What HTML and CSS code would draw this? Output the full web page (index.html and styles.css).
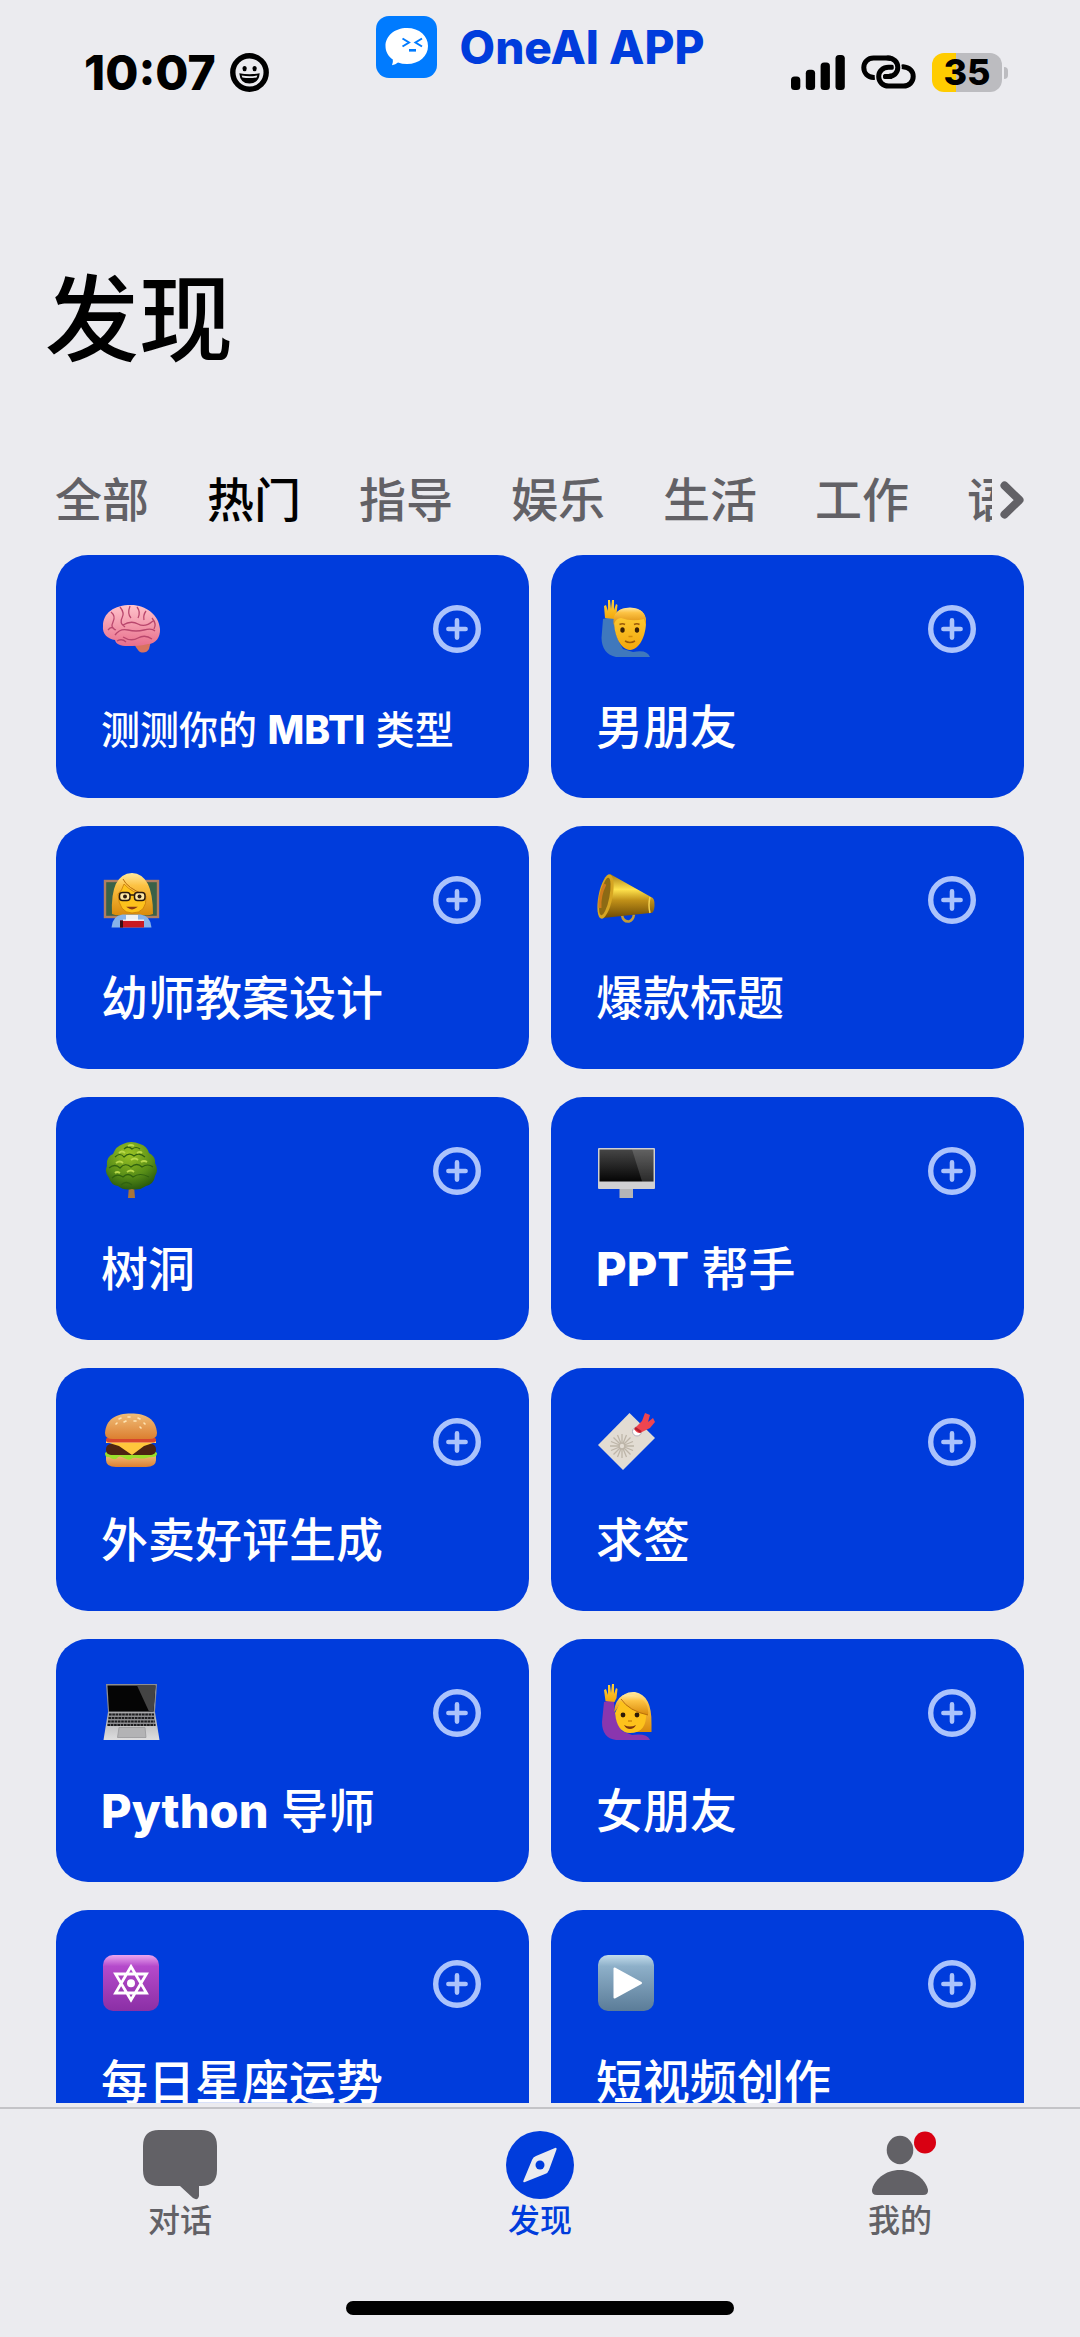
FILE: index.html
```
<!doctype html>
<html lang="zh-CN">
<head>
	<meta charset="UTF-8">
	<meta name="viewport" content="width=device-width, initial-scale=1">
	<title>发现</title>

	<link rel="stylesheet" href="styles.css">
</head>
<body>
	<!-- shared icons -->
	<svg class="defs" aria-hidden="true">
		<defs>
			<symbol id="plus" viewBox="0 0 48 48">
				<circle cx="24" cy="24" r="21.3" fill="none" stroke="currentColor" stroke-width="5.4"/>
				<path d="M24 15.4v17.2M15.4 24h17.2" stroke="currentColor" stroke-width="4.6" stroke-linecap="round"/>
			</symbol>
			<linearGradient id="gold" x1="0" y1="0" x2="0" y2="1">
				<stop offset="0" stop-color="#a87a12"/><stop offset=".35" stop-color="#ffe34d"/><stop offset=".6" stop-color="#c09018"/><stop offset="1" stop-color="#6d4a05"/>
			</linearGradient>
			<linearGradient id="pink" x1="0" y1="0" x2="0" y2="1">
				<stop offset="0" stop-color="#ffc3cb"/><stop offset="1" stop-color="#e86f8c"/>
			</linearGradient>
			<linearGradient id="skin" x1="0" y1="0" x2="0" y2="1">
				<stop offset="0" stop-color="#ffd23a"/><stop offset="1" stop-color="#f3a70c"/>
			</linearGradient>
			<linearGradient id="hair" x1="0" y1="0" x2="0" y2="1">
				<stop offset="0" stop-color="#ffe9a0"/><stop offset=".3" stop-color="#fcc243"/><stop offset="1" stop-color="#d98a0b"/>
			</linearGradient>
			<linearGradient id="screen" x1="0" y1="0" x2="0" y2="1">
				<stop offset="0" stop-color="#464646"/><stop offset="1" stop-color="#050505"/>
			</linearGradient>
			<linearGradient id="metal" x1="0" y1="0" x2="0" y2="1">
				<stop offset="0" stop-color="#a9a9ab"/><stop offset="1" stop-color="#dededf"/>
			</linearGradient>
			<linearGradient id="bun" x1="0" y1="0" x2="0" y2="1">
				<stop offset="0" stop-color="#f0bd78"/><stop offset="1" stop-color="#dc7f30"/>
			</linearGradient>
			<radialGradient id="leaf" cx=".45" cy=".25" r=".8">
				<stop offset="0" stop-color="#9cc425"/><stop offset=".6" stop-color="#578d17"/><stop offset="1" stop-color="#22520d"/>
			</radialGradient>
			<linearGradient id="violet" x1="0" y1="0" x2="0" y2="1">
				<stop offset="0" stop-color="#eba6ee"/><stop offset=".2" stop-color="#b54acb"/><stop offset="1" stop-color="#8b2fa5"/>
			</linearGradient>
			<linearGradient id="steel" x1="0" y1="0" x2="0" y2="1">
				<stop offset="0" stop-color="#c2dceb"/><stop offset=".2" stop-color="#8eb0c9"/><stop offset="1" stop-color="#5b7c98"/>
			</linearGradient>
		</defs>
	</svg>

	<div class="app">
		<header class="status">
			<div class="status-left">
				<span class="time">10:07</span>
				<svg width="39" height="39" viewBox="0 0 39 39" aria-hidden="true">
					<circle cx="19.5" cy="19.5" r="16.7" fill="none" stroke="#000" stroke-width="5.4"/>
					<ellipse cx="14.6" cy="15.6" rx="2.1" ry="2.7"/>
					<ellipse cx="24.6" cy="15.6" rx="2.1" ry="2.7"/>
					<path d="M9.3 20.2q10.200 2 20.400 0q-.8 10.300-10.200 10.300t-10.200-10.300z"/>
					<path d="M11.600 22.400q7.900 1.500 15.800 0l-.8 2q-7.100 1.400-14.200 0z" fill="#ebebef"/>
				</svg>
			</div>
			<a class="brand" href="#">
				<svg width="61" height="62" viewBox="0 0 61 62" aria-hidden="true">
					<rect width="61" height="62" rx="13" fill="#007bff"/>
					<path d="M31 12c12.500 0 21 8 21 18s-8.500 18-21 18q-5 0-9-1.500-2.500 2-6 2.700 1.300-2.600.8-5.600C12 40 9.500 35.500 9.500 30c0-10 9-18 21.500-18z" fill="#fff"/>
					<path d="M26.500 22.500l6.500 4-6.500 4M46 22.500l-6.500 4 6.500 4" fill="none" stroke="#007bff" stroke-width="2"/>
					<rect x="33" y="33" width="7" height="2.600" fill="#007bff"/>
				</svg>
				<span>OneAI APP</span>
			</a>
			<div class="status-right">
				<svg width="54" height="35" viewBox="0 0 54 35" aria-hidden="true">
					<rect x="0" y="21.500" width="9.300" height="13.500" rx="3.500"/>
					<rect x="14.800" y="14.800" width="9.300" height="20.200" rx="3.500"/>
					<rect x="29.600" y="7.500" width="9.300" height="27.500" rx="3.500"/>
					<rect x="44.500" y="0" width="9.300" height="35" rx="3.500"/>
				</svg>
				<svg width="55" height="34" viewBox="0 0 55 34" fill="none" stroke="#000" stroke-width="5" stroke-linecap="butt" aria-hidden="true">
					<path d="M12.800 22.500C6.500 22 2.800 18 2.800 12.600C2.800 7 7 2.900 12.500 2.900H27C32.500 2.900 36.800 7 36.800 12.600C36.800 18 32.500 21.600 27.500 21.600H24.500" stroke-linecap="round"/>
					<path d="M31 12.300H27.500C22 12.300 17.700 16 17.700 21.500C17.700 27 22 31.100 27.500 31.100H42.500C48 31.100 52.200 27 52.200 21.500C52.200 16 48.500 12.300 42 11.700" stroke="#ebebef" stroke-width="8"/>
					<path d="M31 12.300H27.500C22 12.300 17.700 16 17.700 21.500C17.700 27 22 31.100 27.500 31.100H42.500C48 31.100 52.200 27 52.200 21.500C52.200 16 48.500 12.300 42 11.700" stroke-linecap="round"/>
					<path d="M30 2.900C34.500 3.800 36.800 8 36.800 12.600C36.800 17 34 20.400 30.500 21.300" stroke="#ebebef" stroke-width="8"/>
					<path d="M27 2.900C32.500 2.900 36.800 7 36.800 12.600C36.800 18 32.500 21.600 27.500 21.600H24.500" stroke-linecap="round"/>
				</svg>
				<div class="battery"><span>35</span></div>
			</div>
		</header>

		<h1 class="title">发现</h1>

		<nav class="filter">
			<div class="filter-list">
				<button>全部</button>
				<button class="active">热门</button>
				<button>指导</button>
				<button>娱乐</button>
				<button>生活</button>
				<button>工作</button>
				<button>语言</button>
			</div>
			<button class="filter-next" aria-label="更多分类">
				<svg width="24" height="40" viewBox="0 0 24 40" aria-hidden="true"><path d="M4.500 5.500L19.500 20 4.500 34.500" fill="none" stroke="currentColor" stroke-width="8" stroke-linecap="round" stroke-linejoin="round"/></svg>
			</button>
		</nav>

		<main class="cards">
			<article class="card">
				<div class="card-top">
					<svg class="emoji" viewBox="0 0 60 60" aria-hidden="true">
						<path d="M31 41q5 10 8 12 6 2 9-3l2-8z" fill="#d8735f"/>
						<path d="M2 27C2 14 13 6 30 6c15 0 28 10 29 24 .4 8-4 15-12 15-8 2-14 2-20 2-8 0-12-2-13-6C7 40 1 35 2 27z" fill="url(#pink)"/>
						<path d="M7 31q4-5 7 0M10 13q5 4 2 10t3 8M19 8q5 6 2 11t3 9M29 7q-3 8 1 12M36 8q4 5 1 11M45 12q-3 4-2 9M22 26q8-5 15-1t15-3M14 36q5-7 13-5t16 0 11 1M22 38q8 5 15 1t14 1M51 19q5 6 2 11M16 42q5-3 9 1" fill="none" stroke="#b9476d" stroke-width="1.300"/>
					</svg>
					<button class="add" aria-label="添加"><svg><use href="#plus"/></svg></button>
				</div>
				<h2><span class="small">测测你的 <b>MBTI</b> 类型</span></h2>
			</article>

			<article class="card">
				<div class="card-top">
					<svg class="emoji" viewBox="0 0 60 60" aria-hidden="true">
						<path d="M7 20q6-2 11-1 0 18 9 31l10 3q14-3 17 5H20Q6 55 5.500 39z" fill="#3f78bd"/>
						<path d="M9 19L8 7l2-1 2 6 0-11h2l1 9 1-9 2 0 0 10 2-6 1.500 1-1 9-2 5z" fill="url(#skin)"/>
						<path d="M18 22q0-13 16-13t16 14c0 14-7 28-16 28S18 37 18 22z" fill="url(#skin)"/>
						<path d="M17.500 26Q16 9 34 8.500q17 .5 16 17.500l-2-6q-12 3-23-1-5 0-7.500 7z" fill="url(#hair)"/>
						<ellipse cx="26.500" cy="31" rx="2.200" ry="2.800" fill="#3a2106"/><ellipse cx="41" cy="31" rx="2.200" ry="2.800" fill="#3a2106"/>
						<path d="M23.500 25.500q3-1.500 5.500 0M38 25.500q3-1.500 5.500 0M29 42q5 3 10 0" fill="none" stroke="#9a5a08" stroke-width="1.500"/>
						<path d="M32.500 37.500h4" stroke="#d18a0a" stroke-width="1.500"/>
					</svg>
					<button class="add" aria-label="添加"><svg><use href="#plus"/></svg></button>
				</div>
				<h2>男朋友</h2>
			</article>

			<article class="card">
				<div class="card-top">
					<svg class="emoji" viewBox="0 0 60 60" aria-hidden="true">
						<rect x="4" y="11" width="53" height="36" fill="#3a6148" stroke="#b07e62" stroke-width="2.400"/>
						<path d="M11 44Q9 4 31 3q21 1 21 41-5 2-9 1H20q-4 1-9-1z" fill="url(#hair)"/>
						<path d="M17 24q4-3 6-10 8 9 22 12 1 17-14 17-13 0-14-19z" fill="#fdc21c" stroke="#c97c08" stroke-width=".8"/>
						<path d="M10.500 57.600q1-12 11-13h18q10 1 11 13z" fill="#86b3ea"/>
						<path d="M25 45h12v6H25z" fill="#eef1f4"/>
						<rect x="19" y="50.500" width="24" height="7" fill="#c91a22"/><path d="M19 50.500h3v7h-3z" fill="#3b0f13"/><path d="M22 50.200h21" stroke="#fff" stroke-width="1.200"/>
						<path d="M22 9q4 9 22 16" fill="none" stroke="#b96f0a" stroke-width="1"/>
						<g fill="#ffe9a8" stroke="#2a1a10" stroke-width="1.500"><rect x="18.500" y="22.500" width="10.500" height="8" rx="3"/><rect x="33.500" y="22.500" width="10.500" height="8" rx="3"/><path d="M29 25h4.500"/></g>
						<circle cx="24" cy="26.500" r="2" fill="#2a1a10"/><circle cx="38.500" cy="26.500" r="2" fill="#2a1a10"/>
						<path d="M27.500 37.500q3.500 2.500 7 0z" stroke="#8a3a14" stroke-width="1.500" fill="#8a3a14"/>
					</svg>
					<button class="add" aria-label="添加"><svg><use href="#plus"/></svg></button>
				</div>
				<h2>幼师教案设计</h2>
			</article>

			<article class="card">
				<div class="card-top">
					<svg class="emoji" viewBox="0 0 60 60" aria-hidden="true">
						<path d="M26 45q1 7 7 6.500 4-1 5-7" fill="none" stroke="#c09c3c" stroke-width="2.500"/>
						<path d="M14 4l41 23q4 1 3.500 9-.5 8-4.500 7L7 48z" fill="url(#gold)"/>
						<ellipse cx="9.500" cy="26.500" rx="7" ry="22.500" transform="rotate(11 9.500 26.500)" fill="#d6a522"/>
						<ellipse cx="8.800" cy="26.500" rx="4.600" ry="19" transform="rotate(11 8.800 26.500)" fill="#8d6a14"/>
						<path d="M4 38q-1-12 5-24" fill="none" stroke="#cf7a1c" stroke-width="3"/>
						<path d="M54 27q-2 8 0 16" fill="none" stroke="#f0cf51" stroke-width="1.500"/>
					</svg>
					<button class="add" aria-label="添加"><svg><use href="#plus"/></svg></button>
				</div>
				<h2>爆款标题</h2>
			</article>

			<article class="card">
				<div class="card-top">
					<svg class="emoji" viewBox="0 0 60 60" aria-hidden="true">
						<path d="M28 45h5l1 12h-7z" fill="#a9743a"/>
						<path d="M22 3q8-4 17 0 7 2 9 9 7 4 6 10 4 7 0 13-1 8-9 10-7 5-14 3-8 2-14-3-7-1-9-8-5-6-2-12-1-9 6-12 3-8 10-10z" fill="url(#leaf)"/>
						<path d="M14 16q5-5 9 0 5-5 10-1 5-4 11 1M8 27q6-5 11 0 5-6 11-1 6-5 11 0 6-4 11 0M11 37q5-5 11-1 5-5 10 0 7-5 16 0M23 8q4-4 8 0 4-3 8 0M20 44q5-5 11 0" fill="none" stroke="#2f6210" stroke-width="1.200"/>
						<path d="M15 22q4-3 7 0M30 19q4-3 7 0M26 31q4-3 7 0M14 32q2-2 5 0M27 5q3-2 6 0M40 21q3-2 6 0M18 12q3-3 6 0M36 12q3-2 5 0" fill="none" stroke="#b9d94a" stroke-width="1.800"/>
					</svg>
					<button class="add" aria-label="添加"><svg><use href="#plus"/></svg></button>
				</div>
				<h2>树洞</h2>
			</article>

			<article class="card">
				<div class="card-top">
					<svg class="emoji" viewBox="0 0 60 60" aria-hidden="true">
						<rect x="23.500" y="47" width="13.500" height="10" fill="#b5b5b7"/>
						<rect x="2" y="7" width="57" height="41" rx="1" fill="#d0d0d2"/>
						<rect x="3.500" y="8.500" width="54" height="32" fill="url(#screen)"/>
						<path d="M36 8.500h21.500v32H46z" fill="#fff" opacity=".15"/>
					</svg>
					<button class="add" aria-label="添加"><svg><use href="#plus"/></svg></button>
				</div>
				<h2><b>PPT</b> 帮手</h2>
			</article>

			<article class="card">
				<div class="card-top">
					<svg class="emoji" viewBox="0 0 60 60" aria-hidden="true">
						<path d="M5 43h50v5q0 7-10 7H15q-10 0-10-7z" fill="url(#bun)"/>
						<path d="M4 41q4-4 8-2h36q4-2 8 2 0 4-4 4t-7 1-8 0-7 1-7-1-7 0-8-1q-4 1-4-4z" fill="#9be02b"/>
						<rect x="5" y="32" width="50" height="11" rx="5" fill="#4c2412"/>
						<path d="M5 30h50l-12 4-12 9-13-9z" fill="#ffc63c"/>
						<path d="M5 29q25-4 50 0v2H5z" fill="#ffe07a"/>
						<rect x="5" y="25.500" width="50" height="5" rx="2.500" fill="#d8452c"/>
						<path d="M4 21C5 7 15 1.500 30 1.500S55 7 56 21q0 6-8 6H12q-8 0-8-6z" fill="url(#bun)"/>
						<path d="M18 7l2-1M27 5h2M37 6l2 1M23 10l2-1M33 9h2M43 11l1 1M15 12l1-1M39 15l1 1" stroke="#ffe5b5" stroke-width="1.600" stroke-linecap="round"/>
					</svg>
					<button class="add" aria-label="添加"><svg><use href="#plus"/></svg></button>
				</div>
				<h2>外卖好评生成</h2>
			</article>

			<article class="card">
				<div class="card-top">
					<svg class="emoji" viewBox="0 0 60 60" aria-hidden="true">
						<path d="M33.500 1L59 26 27 58 2 33z" fill="#e2dcd3"/>
						<circle cx="41" cy="19.500" r="4.500" fill="#fff" stroke="#b0aeb9" stroke-width="1"/>
						<g stroke="#bdb5a8" stroke-width="1.300"><path d="M26 22v24M14 34h24M17.500 25.500l17 17M34.500 25.500l-17 17M21.500 23l9 22M30.500 23l-9 22M15 29.500l22 9M37 29.500l-22 9"/></g>
						<circle cx="26" cy="34" r="2.200" fill="#e2dcd3"/>
						<path d="M38 17l8-8 3-8 5 2-2 7 5-4 2 4-5 6-8 4q-4 3-8-3z" fill="#ef4550"/>
						<path d="M39 16l6 4" stroke="#b6202e" stroke-width="2.500"/>
					</svg>
					<button class="add" aria-label="添加"><svg><use href="#plus"/></svg></button>
				</div>
				<h2>求签</h2>
			</article>

			<article class="card">
				<div class="card-top">
					<svg class="emoji" viewBox="0 0 60 60" aria-hidden="true">
						<path d="M5 1h51l-2 28H7z" fill="#8d8d90"/>
						<path d="M6.500 2.500h48l-2 26H8z" fill="#050505"/>
						<path d="M36 2.500h18.500l-2 26H48z" fill="#444"/>
						<path d="M7 29h47l4.500 28H2.500z" fill="url(#metal)"/>
						<path d="M8 30h45l1.800 13H6z" fill="#8e8e91"/>
						<path d="M8 31.500h45M7.500 35h46M7 38.500h47M6.500 42h48" stroke="#1c1c1e" stroke-width="2.200" stroke-dasharray="2.600 .7"/>
						<path d="M18 44.500h26l1 10H16.500z" fill="#b3b3b5" stroke="#98989b" stroke-width=".8"/>
					</svg>
					<button class="add" aria-label="添加"><svg><use href="#plus"/></svg></button>
				</div>
				<h2><b>Python</b> 导师</h2>
			</article>

			<article class="card">
				<div class="card-top">
					<svg class="emoji" viewBox="0 0 60 60" aria-hidden="true">
						<path d="M22 18q6-10 17-9 17 3 16.500 32v8H35z" fill="url(#hair)"/>
						<path d="M8 19q5-2 10 0 0 18 8 29l10 4q15-2 18 5H20Q6 55 6 39z" fill="#8a36ae"/>
						<path d="M9.500 18L8 7l2-1 2 6 0-10h2l1 8 1-9 2 0 0 10 2-6 1.500 1-1 9-2 4z" fill="url(#skin)"/>
						<path d="M19 30q3-5 5-13 11 10 26 13 1 20-16 20-13 0-15-20z" fill="#fdc21c"/>
						<path d="M18 29q1-12 9-17 15-2 22 7 4 6 3 13-19-4-27-16-2 9-7 13z" fill="url(#hair)"/>
						<path d="M25 16q8 12 27 16" fill="none" stroke="#b96f0a" stroke-width="1"/>
						<circle cx="27" cy="32" r="2.400" fill="#2c1b08"/><circle cx="41" cy="32" r="2.400" fill="#2c1b08"/>
						<path d="M28 42q6 3 12 0-2 4-6 4t-6-4z" fill="#7b3610"/>
						<path d="M32 38h4" stroke="#d18a0a" stroke-width="1.500"/>
					</svg>
					<button class="add" aria-label="添加"><svg><use href="#plus"/></svg></button>
				</div>
				<h2>女朋友</h2>
			</article>

			<article class="card">
				<div class="card-top">
					<svg class="emoji" viewBox="0 0 60 60" aria-hidden="true">
						<rect x="2" y="1" width="56" height="56" rx="10" fill="url(#violet)"/>
						<path d="M30 12.500L45.500 39h-31zM30 46L14.500 20h31z" fill="none" stroke="#fff" stroke-width="2.800"/>
						<circle cx="30" cy="29.300" r="4" fill="#fff"/>
					</svg>
					<button class="add" aria-label="添加"><svg><use href="#plus"/></svg></button>
				</div>
				<h2>每日星座运势</h2>
			</article>

			<article class="card">
				<div class="card-top">
					<svg class="emoji" viewBox="0 0 60 60" aria-hidden="true">
						<rect x="2" y="1" width="56" height="56" rx="10" fill="url(#steel)"/>
						<path d="M18.500 14.500v29L45 29z" fill="#fff" stroke="#fff" stroke-width="2" stroke-linejoin="round"/>
					</svg>
					<button class="add" aria-label="添加"><svg><use href="#plus"/></svg></button>
				</div>
				<h2>短视频创作</h2>
			</article>
		</main>

		<footer class="bottom">
			<nav class="tabbar">
				<a href="#">
					<svg width="74" height="72" viewBox="0 0 74 72" aria-hidden="true"><path d="M16 1h42q16 0 16 16v24q0 16-16 16h-2v10q-1 5-6 2L37 57H16Q0 57 0 41V17Q0 1 16 1z" fill="currentColor"/></svg>
					<span>对话</span>
				</a>
				<a class="active" href="#">
					<svg width="68" height="72" viewBox="0 0 68 72" aria-hidden="true">
						<circle cx="34" cy="36" r="34" fill="currentColor"/>
						<path d="M49 19q2-1 1.500 1.500L43 41q-1 3-4 4L19 53q-2.500 1-1.500-1.500L26 31q1-3 4-4z" fill="#ebebef"/>
						<circle cx="34" cy="36" r="4.500" fill="currentColor"/>
					</svg>
					<span>发现</span>
				</a>
				<a href="#">
					<svg width="72" height="72" viewBox="0 0 72 72" aria-hidden="true">
						<ellipse cx="36" cy="21" rx="13.300" ry="14.200" fill="currentColor"/>
						<path d="M36 41c15 0 26 10 28 20q.5 5-5 5H13q-5.500 0-5-5c2-10 13-20 28-20z" fill="currentColor"/>
						<circle cx="61" cy="13.500" r="11" fill="#d90012"/>
					</svg>
					<span>我的</span>
				</a>
			</nav>
			<div class="home-bar"></div>
		</footer>
	</div>
</body>
</html>
```
FILE: styles.css
```
*{
	padding: 0;
	margin: 0;
	box-sizing: border-box;
}
body{
	background-color: #ebebef;
	color: #000;
	font-family: Inter, "Noto Sans CJK SC", sans-serif;
}
button{
	border: none;
	background: none;
	font: inherit;
	color: inherit;
	cursor: pointer;
}
a{
	color: inherit;
	text-decoration: none;
}
svg{
	display: block;
	flex-shrink: 0;
}
.defs{
	position: absolute;
	width: 0;
	height: 0;
}
.app{
	display: flex;
	flex-direction: column;
	height: 100vh;
}
/* status bar */
.status{
	display: grid;
	grid-template-columns: 1fr auto 1fr;
	padding: 16px 73px 0;
}
.status-left,
.status-right{
	display: flex;
	align-items: center;
	height: 40px;
	margin-top: 36px;
}
.status-left{
	gap: 14px;
	padding-left: 11px;
}
.status-right{
	justify-content: flex-end;
	gap: 16px;
}
.time{
	font-size: 48px;
	font-weight: 800;
}
.brand{
	display: flex;
	align-items: center;
	gap: 23px;
	height: 62px;
	color: #003cdc;
	font-size: 46px;
	font-weight: 800;
}
.battery{
	position: relative;
	width: 70px;
	height: 39px;
	margin-right: 5px;
	border-radius: 12px;
	background: linear-gradient(to right, #ffcc00 35%, #bcbcc0 35%);
	font-size: 36px;
	font-weight: 800;
	line-height: 39px;
	text-align: center;
}
.battery::after{
	content: "";
	position: absolute;
	right: -6px;
	top: 14px;
	width: 4px;
	height: 12px;
	border-radius: 0 4px 4px 0;
	background-color: #bcbcc0;
}
.title{
	margin-top: 168px;
	padding: 0 45px;
	font-size: 94px;
	font-weight: 500;
	line-height: 120px;
}
/* category filter */
.filter{
	display: flex;
	align-items: center;
	margin-top: 88px;
	padding: 0 56px 0 55px;
	color: #626166;
	font-size: 47px;
	font-weight: 500;
	line-height: 64px;
}
.filter-list{
	display: flex;
	flex: 1;
	gap: 58px;
	overflow: hidden;
}
.filter-list button{
	flex-shrink: 0;
}
.filter-list .active{
	color: #000;
}
.filter-next{
	margin-left: 8px;
}
/* cards */
.cards{
	display: grid;
	grid-template-columns: 1fr 1fr;
	flex: 1;
	align-content: start;
	gap: 28px 22px;
	min-height: 0;
	margin: 23px 56px 4px;
	overflow: hidden;
}
.card{
	padding: 44px 48px 39px 45px;
	border-radius: 32px;
	background-color: #003cdc;
	color: #fff;
}
.card-top{
	display: flex;
	align-items: center;
	justify-content: space-between;
}
.emoji{
	width: 60px;
	height: 60px;
}
.add{
	color: #abc3fc;
}
.add svg{
	width: 48px;
	height: 48px;
}
.card h2{
	margin-top: 36px;
	font-size: 47px;
	font-weight: 500;
	line-height: 64px;
	white-space: nowrap;
}
.card b{
	font-weight: 800;
}
.card .small{
	font-size: 39px;
	line-height: 48px;
}
/* bottom bar */
.bottom{
	border-top: 2px solid #c3c3c7;
	padding: 20px 0 22px;
}
.tabbar{
	display: grid;
	grid-template-columns: 1fr 1fr 1fr;
}
.tabbar a{
	display: flex;
	flex-direction: column;
	align-items: center;
	color: #626166;
	font-size: 32px;
	font-weight: 500;
	line-height: 40px;
}
.tabbar .active{
	color: #003cdc;
}
.home-bar{
	width: 36%;
	height: 14px;
	margin: 60px auto 0;
	border-radius: 7px;
	background-color: #000;
}
```
